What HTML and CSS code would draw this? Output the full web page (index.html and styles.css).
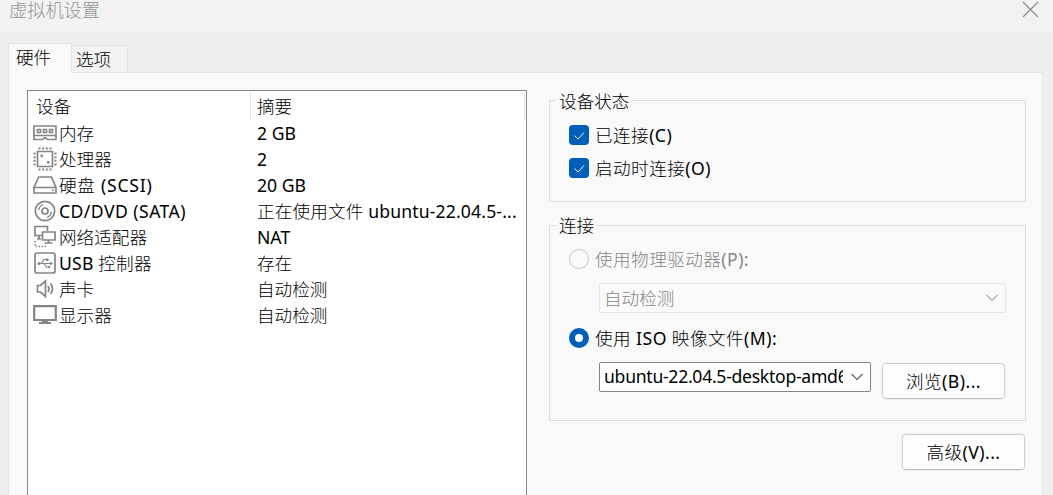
FILE: index.html
```html
<!DOCTYPE html>
<html lang="zh-CN">
<head>
<meta charset="utf-8">
<title>虚拟机设置</title>
<link rel="stylesheet" href="styles.css">
</head>
<body>
<div class="window">
  <header class="titlebar">
    <span class="title">虚拟机设置</span>
    <svg class="close" width="17" height="17" viewBox="0 0 17 17"><path d="M1 1 16 16M16 1 1 16"/></svg>
  </header>
  <nav class="tabs">
    <div class="tab active">硬件</div>
    <div class="tab">选项</div>
  </nav>
  <main class="panel">
    <section class="list">
      <div class="row head"><span class="device">设备</span><span class="summary">摘要</span></div>
      <div class="row"><svg class="icon" viewBox="0 0 24 24"><path d="M1 5H23V18.500H14.500L12 16.500 9.500 18.500H1ZM1 14.500H23"/><path d="M4.500 8.500h3v3h-3zM10.500 8.500h3v3h-3zM16.500 8.500h3v3h-3z"/></svg><span class="device">内存</span><span class="summary">2 GB</span></div>
      <div class="row"><svg class="icon" viewBox="0 0 24 24"><path d="M4.500 4.500H19.500V19.500H4.500Z"/><path class="dots" d="M5.500 1.500H18.500M5.500 22.500H18.500M1.500 5.500V18.500M22.500 5.500V18.500"/><path class="solid" d="M7.500 7.500h2.500v2.500H7.500zM14 14h2.500v2.500H14z"/></svg><span class="device">处理器</span><span class="summary">2</span></div>
      <div class="row"><svg class="icon" viewBox="0 0 24 24"><path d="M5.500 4H18.500L23 14.500V20H1V14.500ZM1.500 14.500H22.500"/><path class="solid" d="M19 16.500h2v1.500h-2z"/></svg><span class="device wider">硬盘 (SCSI)</span><span class="summary">20 GB</span></div>
      <div class="row"><svg class="icon" viewBox="0 0 24 24"><circle cx="12" cy="12" r="9.700"/><circle cx="12" cy="12" r="3"/><path class="fine" d="M5.500 11Q6.500 7 10 5.500M18.500 13Q17.500 17 14 18.500"/></svg><span class="device wide">CD/DVD (SATA)</span><span class="summary file-name">正在使用文件 ubuntu-22.04.5-...</span></div>
      <div class="row"><svg class="icon" viewBox="0 0 24 24"><path d="M8.500 10.500H2V1.500H14.500V6M9.500 7H22V15H9.500ZM15.500 15V18M11.500 18H19.500M6 11V14M4 14H8"/><path class="pins" d="M2 16V21.500H14"/></svg><span class="device">网络适配器</span><span class="summary">NAT</span></div>
      <div class="row"><svg class="icon" viewBox="0 0 24 24"><rect x="2" y="2" width="20" height="20" rx="2"/><path class="fine" d="M6 12.500H18M8.500 12 11 8.500H13.500M11 12.500 13.500 16H16"/><circle class="solid" cx="6" cy="12.500" r="1.500"/><path class="solid" d="M17 10.500 20 12.500 17 14.500ZM13 7.500h2.500v2.500H13zM15 15h2v2h-2z"/></svg><span class="device usb">USB 控制器</span><span class="summary">存在</span></div>
      <div class="row"><svg class="icon" viewBox="0 0 24 24"><path d="M4.500 8.500H7.500L12.500 4V19.500L7.500 15H4.500ZM15 9Q17 12 15 15M17.500 6.500Q21.500 12 17.500 17"/></svg><span class="device">声卡</span><span class="summary">自动检测</span></div>
      <div class="row"><svg class="icon" viewBox="0 0 24 24"><path class="screen" d="M1.200 3.200H22.800V17H1.200Z"/><path class="solid" d="M9 17h6v2h3v2H6v-2h3z"/></svg><span class="device">显示器</span><span class="summary">自动检测</span></div>
    </section>
    <aside class="details">
      <section class="group status">
        <h2>设备状态</h2>
        <div class="choice"><svg class="check" viewBox="0 0 20 20"><path d="M5.500 10.500 9 14 15 7.500"/></svg><span class="wide">已连接(C)</span></div>
        <div class="choice second"><svg class="check" viewBox="0 0 20 20"><path d="M5.500 10.500 9 14 15 7.500"/></svg><span class="wide">启动时连接(O)</span></div>
      </section>
      <section class="group connection">
        <h2>连接</h2>
        <div class="choice physical disabled"><i class="radio"></i><span class="wide">使用物理驱动器(P):</span></div>
        <div class="combo disabled"><span class="value">自动检测</span><svg class="chevron" viewBox="0 0 12 8"><path d="M.5 1 6 6.500 11.500 1"/></svg></div>
        <div class="choice iso"><i class="radio selected"></i><span class="wide">使用 ISO 映像文件(M):</span></div>
        <div class="file"><div class="combo"><span class="value path">ubuntu-22.04.5-desktop-amd64.iso</span><svg class="chevron" viewBox="0 0 12 8"><path d="M.5 1 6 6.500 11.500 1"/></svg></div><button>浏览(B)...</button></div>
      </section>
      <button class="advanced">高级(V)...</button>
    </aside>
  </main>
</div>
</body>
</html>
```
FILE: styles.css
```css
* { box-sizing: border-box; }
body { margin: 0; font: 17.6px/26px "Noto Sans", "Noto Sans CJK SC Light", "Noto Sans CJK SC", sans-serif; color: #000; }
.window { height: 495px; display: flex; flex-direction: column; overflow: hidden; background: #efefef; }
.titlebar { height: 32px; flex: none; display: flex; justify-content: space-between; padding: 0 14px 0 9px; background: #f2f2f2; color: #929292; }
.title { font-size: 18.2px; line-height: 20px; }
.close { margin-top: 1px; fill: none; stroke: #8d8d8d; stroke-width: 1.300; }
.tabs { height: 41px; flex: none; display: flex; align-items: flex-end; padding-left: 8px; z-index: 1; }
.tab { width: 56px; height: 27px; margin-bottom: 1px; border: 1px solid #e3e3e3; border-left: 0; border-bottom: 0; background: #f2f2f2; padding: 0 0 0 4px; }
.tab.active { width: 64px; height: 30px; margin-bottom: 0; border-left: 1px solid #e3e3e3; background: #f9f9f9; padding: 0 0 0 7px; }
.panel { height: 424px; flex: none; margin: -1px 10px 0 8px; border: 1px solid #e3e3e3; border-bottom: 0; background: #f9f9f9; display: flex; padding: 17px 16px 0 18px; gap: 22px; }
.list { width: 500px; flex: none; border: 1px solid #828790; border-bottom: 0; background: #fff; }
.row { height: 26px; display: flex; align-items: center; padding-left: 5px; white-space: nowrap; }
.row.head { height: 29px; padding: 1px 1px 0 0; }
.head .summary { flex: 1; height: 28px; padding: 1px 0 0 6px; border-right: 1px solid #e3e3e3; }
.icon { width: 24px; height: 24px; flex: none; margin-right: 2px; fill: none; stroke: #858585; stroke-width: 1.700; }
.row .device { width: 198px; flex: none; }
.row.head .device { width: 223px; height: 28px; padding: 1px 0 0 8px; border-right: 1px solid #e3e3e3; }
.icon .fine { stroke-width: 1.200; }
.icon .dots { stroke-width: 2; stroke-dasharray: 2 1.670; }
.icon .pins { stroke-width: 1.500; stroke-dasharray: 1.500 1.500; }
.icon .solid { fill: #858585; stroke: none; }
.icon .screen { stroke-width: 2.200; }
.wide { letter-spacing: .45px; }
.wider { letter-spacing: .75px; }
.usb { letter-spacing: .2px; }
.file-name { letter-spacing: .15px; }
.details { width: 477px; padding-top: 10px; }
.group { border: 1px solid #dcdcdc; padding-left: 19px; }
.group h2 { width: max-content; height: 26px; margin: -13px 0 0 -13px; padding: 0 3px; background: #f9f9f9; font: inherit; }
.status { height: 102px; }
.connection { height: 196px; margin-top: 23px; }
.connection h2 { margin-top: -14px; }
.choice { height: 26px; margin-top: 8px; display: flex; align-items: center; gap: 6px; white-space: nowrap; }
.choice.second { margin-top: 7px; }
.check { width: 20px; height: 20px; border-radius: 4px; background: #005fb8; fill: none; stroke: #fff; stroke-width: 1; }
.radio { width: 20px; height: 20px; border: 1px solid #c5c5c5; border-radius: 50%; }
.radio.selected { border: 6px solid #005fb8; background: #fff; }
.disabled { color: #858585; }
.combo { width: 272px; height: 30px; border: 1px solid #858585; border-radius: 2px; background: #fff; display: flex; align-items: center; justify-content: space-between; padding: 0 7px 0 4px; }
.combo.disabled { width: 407px; margin: 11px 0 0 30px; border-color: #e6e6e6; background: #fafafa; }
.value { width: 239px; overflow: hidden; white-space: nowrap; }
.path { letter-spacing: -.28px; margin-top: -2px; }
.chevron { width: 12px; height: 8px; flex: none; fill: none; stroke: #5c5c5c; stroke-width: 1.100; }
.disabled .chevron { stroke: #aaa; }
.choice.iso { margin-top: 12px; }
.file { display: flex; gap: 11px; margin: 11px 0 0 30px; }
button { width: 123px; height: 36px; margin: 1px 0 0; padding: 0; border: 1px solid #d0d0d0; border-bottom-color: #bcbcbc; border-radius: 4px; outline: 1px solid #f1f1f1; background: #fdfdfd; color: #000; font: inherit; letter-spacing: .45px; }
.advanced { display: block; margin: 13px 0 0 353px; }
```
